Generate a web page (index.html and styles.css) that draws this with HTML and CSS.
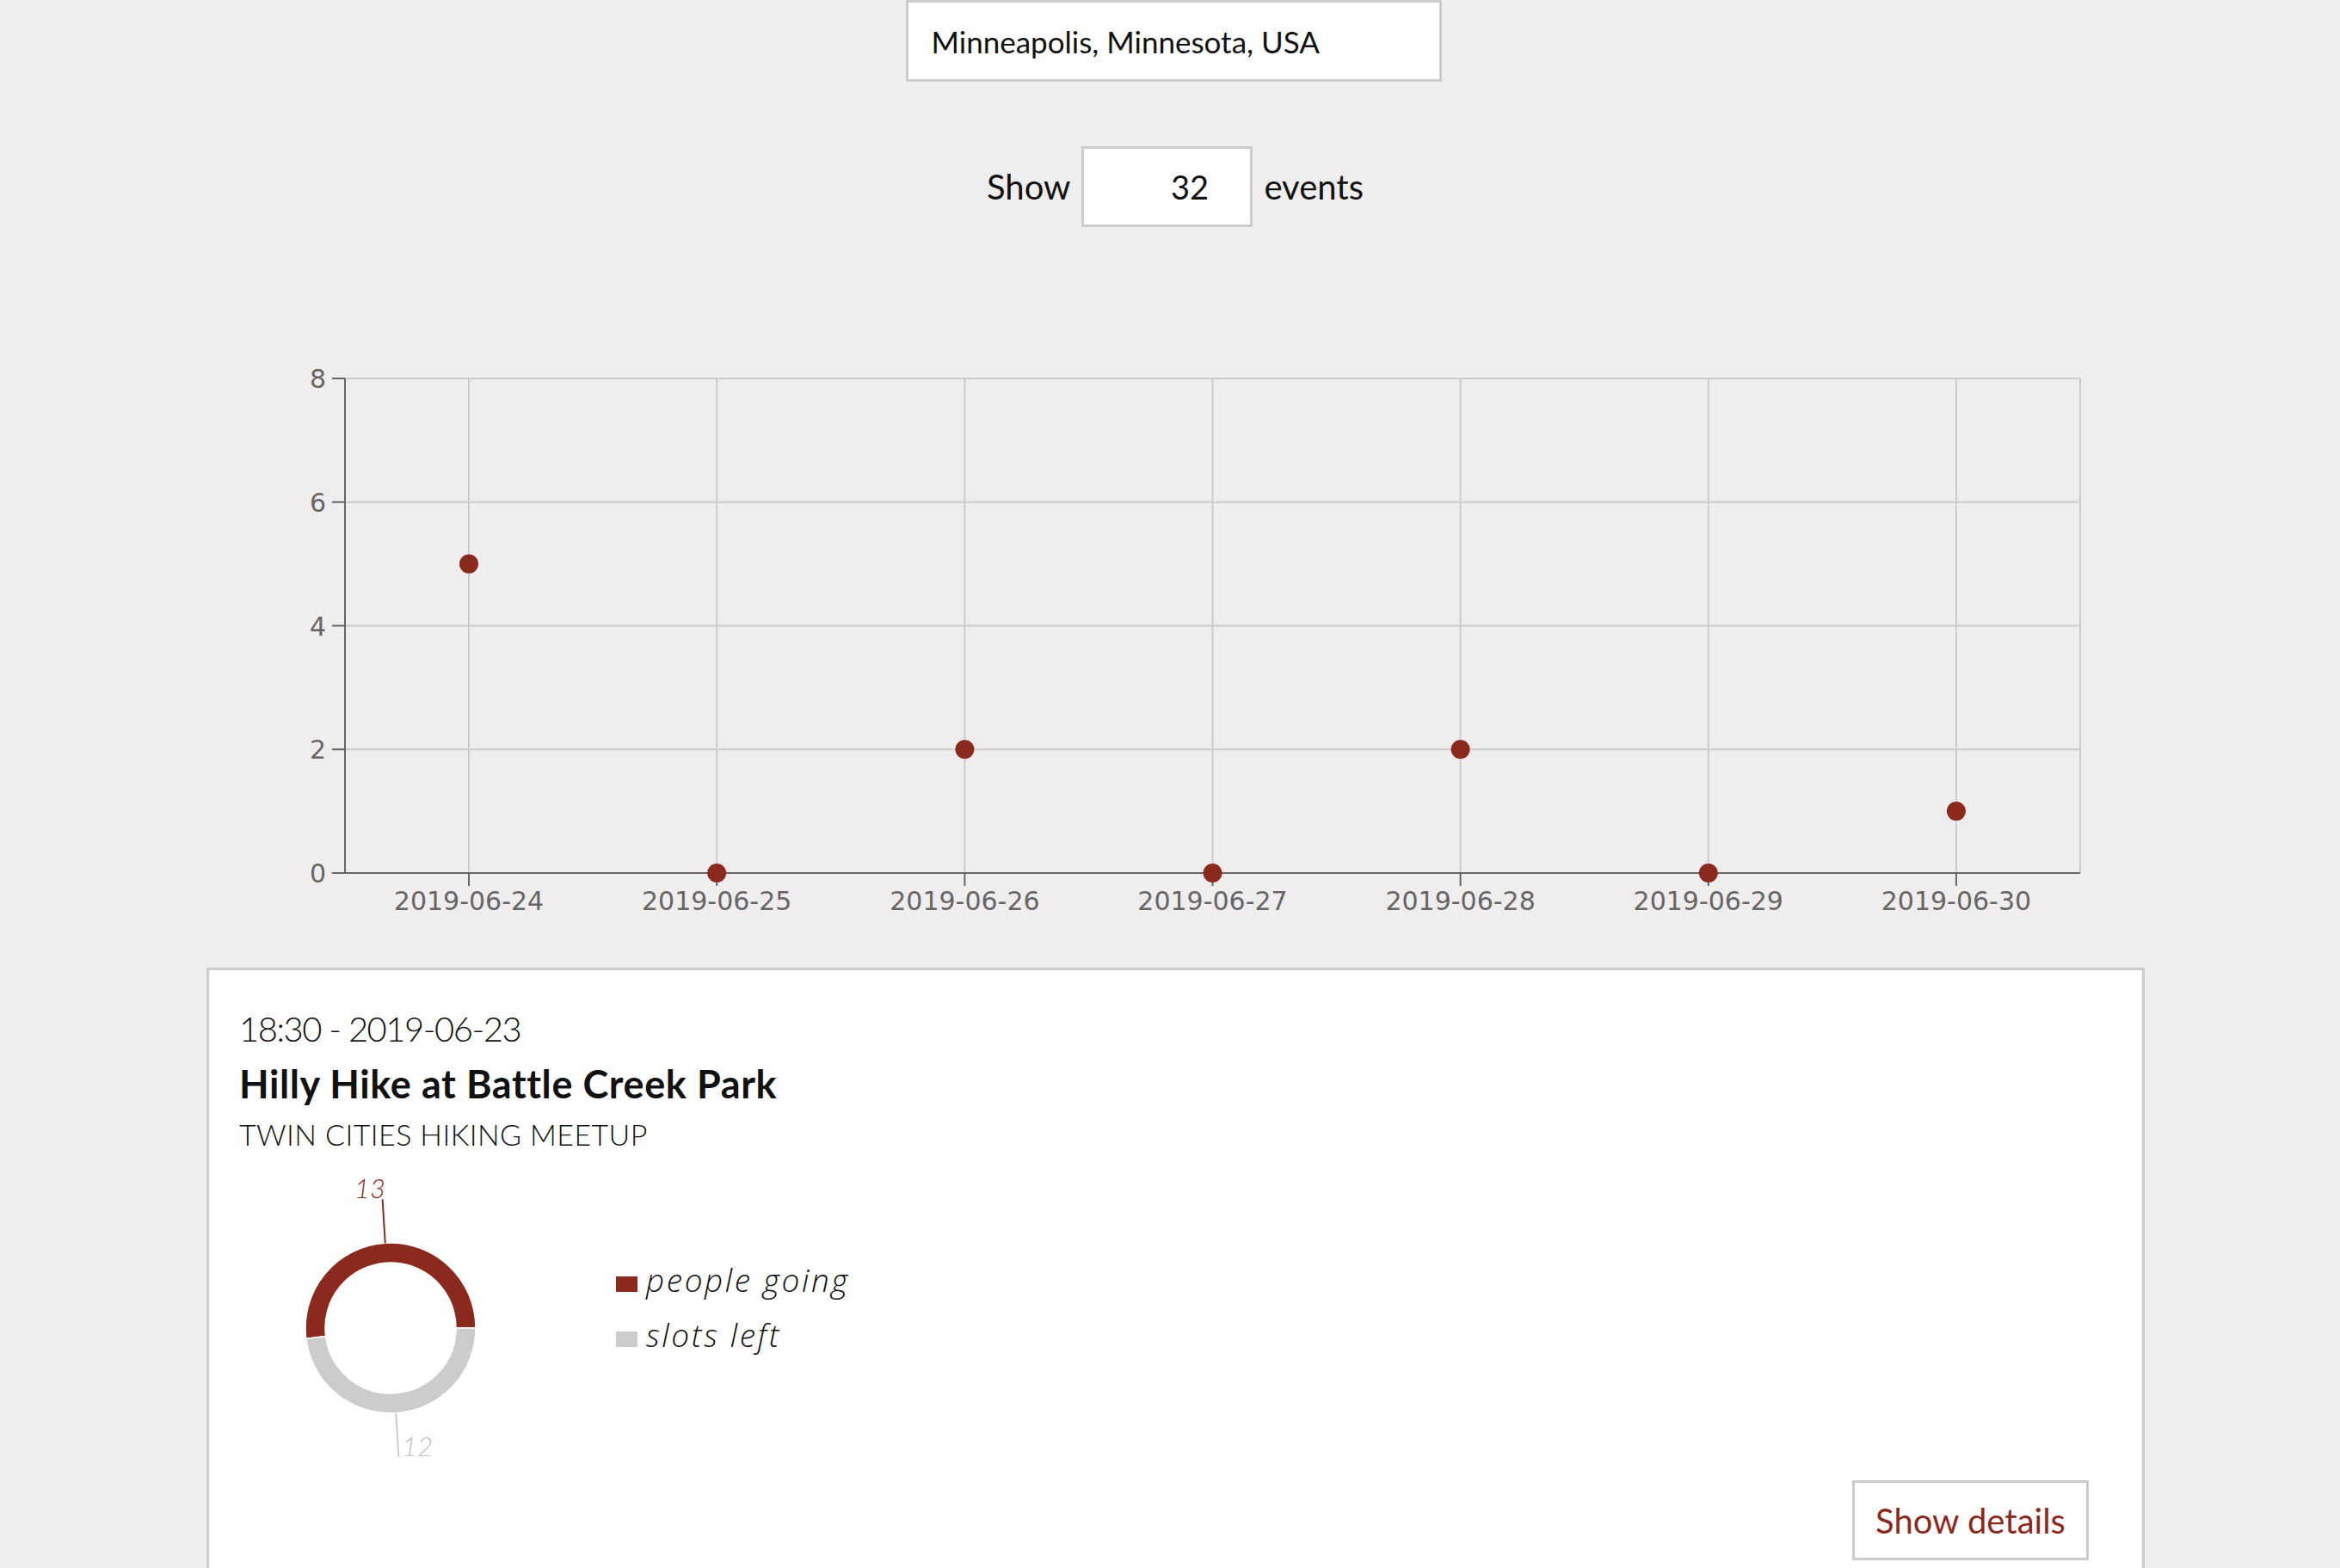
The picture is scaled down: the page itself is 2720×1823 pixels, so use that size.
FILE: index.html
```html
<!DOCTYPE html>
<html lang="en">
<head>
<meta charset="utf-8">
<title>Meetup events</title>
<link rel="stylesheet" href="styles.css">
</head>
<body>
<header class="controls">
  <div class="search-row">
    <input class="location" type="text" value="Minneapolis, Minnesota, USA">
  </div>
  <div class="count-row">
    <span class="count-label">Show</span>
    <input class="count" type="text" inputmode="numeric" value="32">
    <span class="count-label">events</span>
  </div>
</header>

<svg class="chart" width="2200" height="861" viewBox="0 0 2200 861">
  <g transform="translate(141,176)">
    <g class="grid">
      <line x1="0" y1="0" x2="2017" y2="0"/>
      <line x1="0" y1="143.75" x2="2017" y2="143.75"/>
      <line x1="0" y1="287.5" x2="2017" y2="287.5"/>
      <line x1="0" y1="431.25" x2="2017" y2="431.25"/>
      <line x1="144" y1="0" x2="144" y2="575"/>
      <line x1="432.2" y1="0" x2="432.2" y2="575"/>
      <line x1="720.4" y1="0" x2="720.4" y2="575"/>
      <line x1="1008.5" y1="0" x2="1008.5" y2="575"/>
      <line x1="1296.6" y1="0" x2="1296.6" y2="575"/>
      <line x1="1584.8" y1="0" x2="1584.8" y2="575"/>
      <line x1="1872.9" y1="0" x2="1872.9" y2="575"/>
      <line x1="2017" y1="0" x2="2017" y2="575"/>
    </g>
    <g class="axis">
      <line x1="0" y1="0" x2="0" y2="576"/>
      <line x1="0" y1="575" x2="2017" y2="575"/>
      <line x1="-15" y1="0" x2="0" y2="0"/>
      <line x1="-15" y1="143.75" x2="0" y2="143.75"/>
      <line x1="-15" y1="287.5" x2="0" y2="287.5"/>
      <line x1="-15" y1="431.25" x2="0" y2="431.25"/>
      <line x1="-15" y1="575" x2="0" y2="575"/>
      <line x1="144" y1="575" x2="144" y2="590"/>
      <line x1="432.2" y1="575" x2="432.2" y2="590"/>
      <line x1="720.4" y1="575" x2="720.4" y2="590"/>
      <line x1="1008.5" y1="575" x2="1008.5" y2="590"/>
      <line x1="1296.6" y1="575" x2="1296.6" y2="590"/>
      <line x1="1584.8" y1="575" x2="1584.8" y2="590"/>
      <line x1="1872.9" y1="575" x2="1872.9" y2="590"/>
    </g>
    <g class="ylabels">
      <text x="-22" y="11">8</text>
      <text x="-22" y="154.75">6</text>
      <text x="-22" y="298.5">4</text>
      <text x="-22" y="442.25">2</text>
      <text x="-22" y="586">0</text>
    </g>
    <g class="xlabels">
      <text x="144" y="618">2019-06-24</text>
      <text x="432.2" y="618">2019-06-25</text>
      <text x="720.4" y="618">2019-06-26</text>
      <text x="1008.5" y="618">2019-06-27</text>
      <text x="1296.6" y="618">2019-06-28</text>
      <text x="1584.8" y="618">2019-06-29</text>
      <text x="1872.9" y="618">2019-06-30</text>
    </g>
    <g class="dots">
      <circle cx="144" cy="215.6" r="11"/>
      <circle cx="432.2" cy="575" r="11"/>
      <circle cx="720.4" cy="431.25" r="11"/>
      <circle cx="1008.5" cy="575" r="11"/>
      <circle cx="1296.6" cy="431.25" r="11"/>
      <circle cx="1584.8" cy="575" r="11"/>
      <circle cx="1872.9" cy="503.1" r="11"/>
    </g>
  </g>
</svg>

<article class="card">
  <div class="when">18:30 - 2019-06-23</div>
  <h2 class="title">Hilly Hike at Battle Creek Park</h2>
  <div class="group">TWIN CITIES HIKING MEETUP</div>
  <div class="stats">
    <svg class="donut" width="438" height="360" viewBox="0 0 438 360">
      <path class="seg-going" d="M 275 196 A 99 99 0 1 0 77.78 208.41 L 100.6 205.53 A 76 76 0 1 1 252 196 Z"/>
      <path class="seg-left" d="M 77.78 208.41 A 99 99 0 0 0 275 196 L 252 196 A 76 76 0 0 1 100.6 205.53 Z"/>
      <line class="lead-going" x1="169.8" y1="97.5" x2="166.6" y2="46.3"/>
      <line class="lead-left" x1="182.2" y1="294.5" x2="185.4" y2="345.7"/>
      <text class="lbl-going" x="170" y="45">13</text>
      <text class="lbl-left" x="189" y="345">12</text>
    </svg>
    <ul class="legend">
      <li><span class="swatch swatch-going"></span>people going</li>
      <li><span class="swatch swatch-left"></span>slots left</li>
    </ul>
  </div>
  <div class="actions">
    <button class="details" type="button">Show details</button>
  </div>
</article>
</body>
</html>
```
FILE: styles.css
```css
html, body {
  margin: 0;
  padding: 0;
}

body {
  background: #efeded;
  font-family: "Lato", "Noto Sans", sans-serif;
  color: #111;
}

.controls {
  display: flex;
  flex-direction: column;
  align-items: center;
}

.search-row {
  display: flex;
  justify-content: center;
}

.location {
  box-sizing: border-box;
  width: 623px;
  height: 95px;
  margin: 0 0 0 8px;
  padding: 0 0 0 27px;
  border: 3px solid #cccccc;
  background: #fff;
  font-family: "Lato", sans-serif;
  font-size: 35px;
  color: #111;
  outline: none;
}

.count-row {
  display: flex;
  align-items: center;
  gap: 13px;
  margin-top: 75px;
  margin-left: 12px;
}

.count-label {
  font-size: 40px;
  color: #111;
}

.count {
  box-sizing: border-box;
  width: 199px;
  height: 94px;
  margin: 0;
  padding: 0 0 0 52px;
  border: 3px solid #cccccc;
  background: #fff;
  text-align: center;
  font-family: "Lato", sans-serif;
  font-size: 38px;
  color: #111;
  outline: none;
}

.chart {
  display: block;
  margin: 0 auto;
}

.grid line {
  stroke: #cccccc;
  stroke-width: 2;
}

.axis line {
  stroke: #666666;
  stroke-width: 2;
}

.ylabels text {
  font-family: "DejaVu Sans", sans-serif;
  font-size: 30px;
  fill: #666666;
  text-anchor: end;
}

.xlabels text {
  font-family: "DejaVu Sans", sans-serif;
  font-size: 30px;
  fill: #666666;
  text-anchor: middle;
}

.dots circle {
  fill: #8a2a1f;
}

.card {
  box-sizing: border-box;
  width: 2253px;
  margin: 0 0 0 240px;
  padding: 44px 35px 40px 35px;
  background: #fff;
  border: 3px solid #cccccc;
}

.when {
  font-size: 40px;
  font-weight: 300;
  line-height: 48px;
  letter-spacing: -1.5px;
}

.title {
  margin: 10px 0 0 0;
  font-size: 45px;
  font-weight: 700;
  line-height: 60px;
  letter-spacing: 0.6px;
}

.group {
  margin-top: 4px;
  font-size: 34px;
  font-weight: 300;
  line-height: 50px;
  letter-spacing: 0.4px;
}

.stats {
  display: flex;
  align-items: flex-start;
  margin-top: 4px;
}

.donut {
  display: block;
  flex: none;
}

.seg-going {
  fill: #8a2a1f;
  stroke: #fff;
  stroke-width: 1.5;
}

.seg-left {
  fill: #cccccc;
  stroke: #fff;
  stroke-width: 1.5;
}

.lead-going {
  stroke: #8a2a1f;
  stroke-width: 2;
}

.lead-left {
  stroke: #cccccc;
  stroke-width: 2;
}

.lbl-going,
.lbl-left {
  font-family: "Lato", sans-serif;
  font-style: italic;
  font-weight: 300;
  font-size: 31px;
}

.lbl-going {
  fill: #8a2a1f;
  text-anchor: end;
}

.lbl-left {
  fill: #c4c4c4;
  text-anchor: start;
}

.legend {
  list-style: none;
  margin: 108px 0 0 0;
  padding: 0;
}

.legend li {
  font-family: "Open Sans", "Lato", sans-serif;
  font-size: 37px;
  font-style: italic;
  font-weight: 300;
  line-height: 64px;
  letter-spacing: 2.6px;
  color: #111;
}

.swatch {
  display: inline-block;
  width: 25px;
  height: 18px;
  margin-right: 10px;
  vertical-align: baseline;
}

.swatch-going {
  background: #8a2a1f;
}

.swatch-left {
  background: #cccccc;
}

.actions {
  display: flex;
  justify-content: flex-end;
  margin-top: 13px;
  padding-right: 27px;
}

.details {
  box-sizing: border-box;
  width: 275px;
  height: 93px;
  margin: 0;
  padding: 0;
  border: 3px solid #cccccc;
  background: #fff;
  color: #8a2a1f;
  font-family: "Lato", sans-serif;
  font-size: 40px;
  cursor: pointer;
}
```
